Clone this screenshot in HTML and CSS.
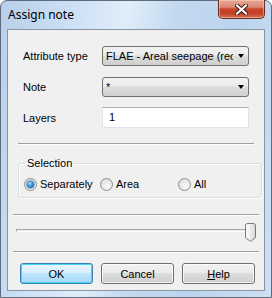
FILE: index.html
```html
<!DOCTYPE html>
<html lang="en">
<head>
    <meta charset="UTF-8">
    <title>Assign note</title>
    <link rel="stylesheet" href="styles.css">
</head>
<body>
    <div class="window">
        <div class="titlebar">
            <span class="title">Assign note</span>
            <span class="close">
                <svg width="13" height="11" viewBox="0 0 13 11">
                    <path d="M2 1.5 L11 9.5 M11 1.5 L2 9.5" stroke="#3d1d16" stroke-width="4.2" stroke-linecap="square"/>
                    <path d="M2 1.5 L11 9.5 M11 1.5 L2 9.5" stroke="#fff" stroke-width="2.2" stroke-linecap="square"/>
                </svg>
            </span>
        </div>

        <div class="client">
            <div class="fields">
                <label>Attribute type</label>
                <div class="combo">
                    <span class="combo-text">FLAE - Areal seepage (rec</span>
                    <span class="arrow"></span>
                </div>
                <label>Note</label>
                <div class="combo">
                    <span class="combo-text">*</span>
                    <span class="arrow"></span>
                </div>
                <label>Layers</label>
                <div class="textbox">1</div>
            </div>

            <div class="sep"></div>

            <fieldset class="group">
                <legend>Selection</legend>
                <div class="radios">
                    <span class="radio checked"><i></i>Separately</span>
                    <span class="radio"><i></i>Area</span>
                    <span class="radio"><i></i>All</span>
                </div>
            </fieldset>

            <div class="sep sep-mid"></div>

            <div class="slider">
                <div class="track"></div>
                <svg class="thumb" width="11" height="19" viewBox="0 0 11 19">
                    <defs>
                        <linearGradient id="tg" x1="0" y1="0" x2="1" y2="0">
                            <stop offset="0" stop-color="#fdfdfd"/>
                            <stop offset="0.5" stop-color="#ececec"/>
                            <stop offset="1" stop-color="#d6d6d6"/>
                        </linearGradient>
                    </defs>
                    <path d="M2.5 0.5 H8.5 Q10.5 0.5 10.5 2.5 V14.5 L5.5 18.5 L0.5 14.5 V2.5 Q0.5 0.5 2.5 0.5 Z" fill="url(#tg)" stroke="#767676"/>
                </svg>
            </div>

            <div class="sep sep-low"></div>

            <div class="buttons">
                <button class="btn default">OK</button>
                <button class="btn">Cancel</button>
                <button class="btn"><u>H</u>elp</button>
            </div>
        </div>
    </div>
</body>
</html>
```

FILE: styles.css
```css
body {
    margin: 0;
    background: #ffffff;
    font-family: "Liberation Sans", Arial, sans-serif;
    font-size: 11px;
    color: #000;
}
.window {
    width: 272px;
    height: 298px;
    box-sizing: border-box;
    border: 1px solid #5d6b7c;
    border-radius: 7px 7px 0 0;
    padding: 0 6px 6px;
    display: flex;
    flex-direction: column;
    background: linear-gradient(100deg, #b6cfe9 0%, #cfe2f6 25%, #e0edf9 40%, #c3d9f0 55%, #bcd4ee 75%, #cde0f4 100%);
}
.titlebar {
    height: 28px;
    flex-shrink: 0;
    display: flex;
    justify-content: space-between;
    align-items: flex-start;
}
.title {
    font-family: "Noto Sans", sans-serif;
    font-size: 12px;
    line-height: 16px;
    margin: 6px 0 0 1px;
    color: #000;
}
.close {
    width: 47px;
    height: 19px;
    margin-top: -1px;
    box-sizing: border-box;
    border: 1px solid #6b2f22;
    border-top: none;
    border-radius: 0 0 5px 5px;
    background: linear-gradient(#e9a999 0%, #dc8772 40%, #c8452c 50%, #c34027 75%, #d9735a 100%);
    box-shadow: inset 0 0 0 1px rgba(255, 220, 200, 0.45);
    display: flex;
    align-items: center;
    justify-content: center;
}
.close svg {
    display: block;
}
.client {
    flex: 1;
    border: 1px solid #8995a4;
    background: #f0f0f0;
    display: flex;
    flex-direction: column;
}
.client > * {
    flex-shrink: 0;
}
.fields {
    display: grid;
    grid-template-columns: 79px 147px;
    grid-auto-rows: 20px;
    row-gap: 11px;
    align-items: center;
    margin: 16px 0 0 15px;
}
.combo {
    height: 20px;
    box-sizing: border-box;
    border: 1px solid #707070;
    border-radius: 3px;
    background: linear-gradient(#f2f2f2 0%, #ebebeb 45%, #dddddd 50%, #cfcfcf 100%);
    display: flex;
    align-items: center;
    padding: 0 4px 0 3px;
}
.combo-text {
    flex: 1;
    overflow: hidden;
    white-space: nowrap;
    line-height: 13px;
}
.arrow {
    width: 0;
    height: 0;
    margin-left: 5px;
    border-left: 3.5px solid transparent;
    border-right: 3.5px solid transparent;
    border-top: 4px solid #000;
}
.textbox {
    height: 21px;
    margin-top: -1px;
    box-sizing: border-box;
    border: 1px solid #e2e3ea;
    border-top-color: #abadb3;
    background: #fff;
    padding: 0 6px;
    line-height: 19px;
}
.sep {
    height: 0;
    border-top: 1px solid #a0a0a0;
    border-bottom: 1px solid #fff;
    margin: 15px 10px 0 10px;
}
.sep-mid {
    margin: 16px 5px 0 5px;
}
.sep-low {
    margin: 9px 5px 0 5px;
}
.group {
    margin: 12px 10px 0 10px;
    padding: 8px 5px 6px 5px;
    border: 1px solid #d5dfe5;
    border-radius: 3px;
    box-shadow: inset 1px 1px 0 #fff, 1px 1px 0 #fff;
}
.group legend {
    padding: 0 2px;
    margin-left: 1px;
    line-height: 13px;
}
.radios {
    display: flex;
    line-height: 13px;
}
.radio {
    display: flex;
    align-items: center;
    width: 76px;
}
.radio + .radio {
    width: 78px;
}
.radio i {
    width: 13px;
    height: 13px;
    box-sizing: border-box;
    border-radius: 50%;
    border: 1px solid #8e8f8f;
    background: radial-gradient(circle at 60% 65%, #fbfbfb 0%, #e6e6e6 55%, #cfcfcf 100%);
    margin-right: 3px;
    display: flex;
    align-items: center;
    justify-content: center;
}
.radio.checked i::after {
    content: "";
    width: 7px;
    height: 7px;
    border-radius: 50%;
    background: radial-gradient(circle at 40% 35%, #a9dcff 0%, #3b9de0 40%, #0d4f95 100%);
    box-shadow: 0 0 0 0.5px #1d5c98;
}
.slider {
    display: flex;
    align-items: flex-start;
    margin: 7px 0 0 8px;
    height: 19px;
}
.track {
    flex: 1;
    height: 1px;
    margin-top: 6px;
    border-top: 1px solid #a7a7a7;
    border-left: 1px solid #a7a7a7;
    border-bottom: 1px solid #ffffff;
    background: #e8e8e8;
    margin-right: -5px;
}
.thumb {
    display: block;
    margin-right: 8px;
}
.buttons {
    display: flex;
    gap: 8px;
    margin: 10px 0 0 12px;
}
.btn {
    width: 73px;
    height: 21px;
    padding: 0;
    font-family: inherit;
    font-size: 11px;
    color: #000;
    border: 1px solid #707070;
    border-radius: 3px;
    background: linear-gradient(#f2f2f2 0%, #ebebeb 45%, #dddddd 50%, #cfcfcf 100%);
    box-shadow: inset 0 0 0 1px rgba(255, 255, 255, 0.7);
}
.btn.default {
    border-color: #3c7fb1;
    background: linear-gradient(#eaf6fd 0%, #d9f0fc 45%, #bee6fd 50%, #a7d9f5 100%);
    box-shadow: inset 0 0 0 1px #48d6fb;
}
```
